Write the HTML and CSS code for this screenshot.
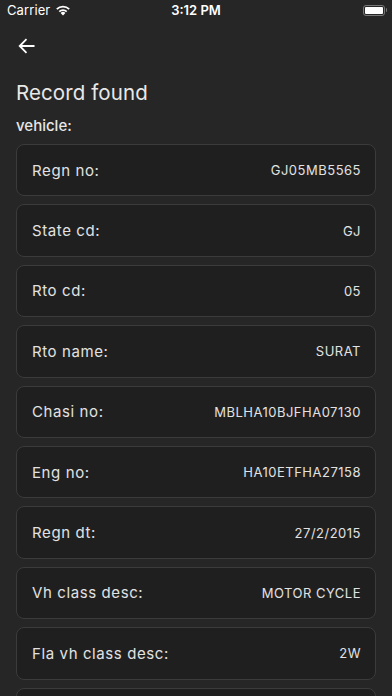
FILE: index.html
```html
<!DOCTYPE html>
<html>
<head>
<meta charset="utf-8">
<link rel="stylesheet" href="styles.css">
</head>
<body>
<div class="status">
  <div class="st-left">Carrier
    <svg class="wifi" width="16" height="12" viewBox="0 0 16 12"><path d="M8 11.5 L5.6 9 A3.4 3.4 0 0 1 10.4 9 Z" fill="#fff"/><path d="M3.7 7.1 A6.1 6.1 0 0 1 12.3 7.1 L11.1 8.3 A4.4 4.4 0 0 0 4.9 8.3 Z" fill="#fff"/><path d="M1.2 4.6 A9.6 9.6 0 0 1 14.8 4.6 L13.6 5.8 A7.9 7.9 0 0 0 2.4 5.8 Z" fill="#fff"/></svg>
  </div>
  <div class="st-time">3:12 PM</div>
  <div class="st-right">
    <div class="battery"><div class="fill"></div></div><div class="nub"></div>
  </div>
</div>
<div class="nav">
  <svg width="18" height="18" viewBox="0 0 18 18"><path d="M16.5 9 H2 M8.5 2.2 L1.7 9 L8.5 15.8" stroke="#fff" stroke-width="1.8" fill="none"/></svg>
</div>
<h1 class="title">Record found</h1>
<div class="section">vehicle:</div>
<div class="list">
  <div class="card"><span class="lbl">Regn no:</span><span class="val">GJ05MB5565</span></div>
  <div class="card"><span class="lbl">State cd:</span><span class="val">GJ</span></div>
  <div class="card"><span class="lbl">Rto cd:</span><span class="val">05</span></div>
  <div class="card"><span class="lbl">Rto name:</span><span class="val">SURAT</span></div>
  <div class="card"><span class="lbl">Chasi no:</span><span class="val">MBLHA10BJFHA07130</span></div>
  <div class="card"><span class="lbl">Eng no:</span><span class="val">HA10ETFHA27158</span></div>
  <div class="card"><span class="lbl">Regn dt:</span><span class="val">27/2/2015</span></div>
  <div class="card"><span class="lbl">Vh class desc:</span><span class="val">MOTOR CYCLE</span></div>
  <div class="card"><span class="lbl">Fla vh class desc:</span><span class="val">2W</span></div>
  <div class="card"></div>
</div>
</body>
</html>
```
FILE: styles.css
```css
html, body {
  margin: 0;
  padding: 0;
  background: #262626;
  height: 696px;
  overflow: hidden;
}
body {
  font-family: Inter, "Noto Sans", sans-serif;
  color: #e6e6e6;
}
.status {
  height: 20px;
  display: flex;
  align-items: center;
  justify-content: space-between;
  padding: 0 5px 0 7px;
  position: relative;
  font-family: Inter, sans-serif;
  font-size: 13px;
  color: #fff;
}
.st-left {
  display: flex;
  align-items: center;
  gap: 5px;
  letter-spacing: 0.1px;
}
.st-time {
  position: absolute;
  left: 0;
  right: 0;
  text-align: center;
  font-weight: 600;
  font-size: 13px;
}
.st-right {
  display: flex;
  align-items: center;
}
.battery {
  width: 18px;
  height: 7px;
  border: 1.5px solid #777;
  border-radius: 3px;
  padding: 1px;
  display: flex;
}
.battery .fill {
  flex: 1;
  background: #fff;
  border-radius: 1px;
}
.nub {
  width: 1.5px;
  height: 4px;
  background: #777;
  margin-left: 1px;
  border-radius: 0 1px 1px 0;
}
.nav {
  height: 24px;
  margin-top: 14px;
  padding-left: 18px;
  display: flex;
  align-items: center;
}
.title {
  margin: 0;
  margin-top: 22px;
  padding-left: 16px;
  font-size: 20.5px;
  font-weight: 400;
  line-height: 26px;
  color: #e8e8e8;
  letter-spacing: 0.1px;
}
.section {
  padding-left: 16px;
  margin-top: 11px;
  font-size: 15px;
  line-height: 18px;
  font-weight: 500;
  color: #e6e6e6;
}
.list {
  margin: 9px 16px 0 16px;
  display: flex;
  flex-direction: column;
  gap: 8px;
}
.card {
  height: 50.4px;
  flex-shrink: 0;
  border: 1px solid #3b3b3b;
  border-radius: 8px;
  background: #1f1f1f;
  display: flex;
  align-items: center;
  justify-content: space-between;
  padding: 0 14px 0 15px;
}
.lbl {
  font-size: 15px;
  letter-spacing: 0.6px;
  color: #e2e2e2;
}
.val {
  font-size: 13px;
  letter-spacing: 0.5px;
  color: #e2e2e2;
}
```
